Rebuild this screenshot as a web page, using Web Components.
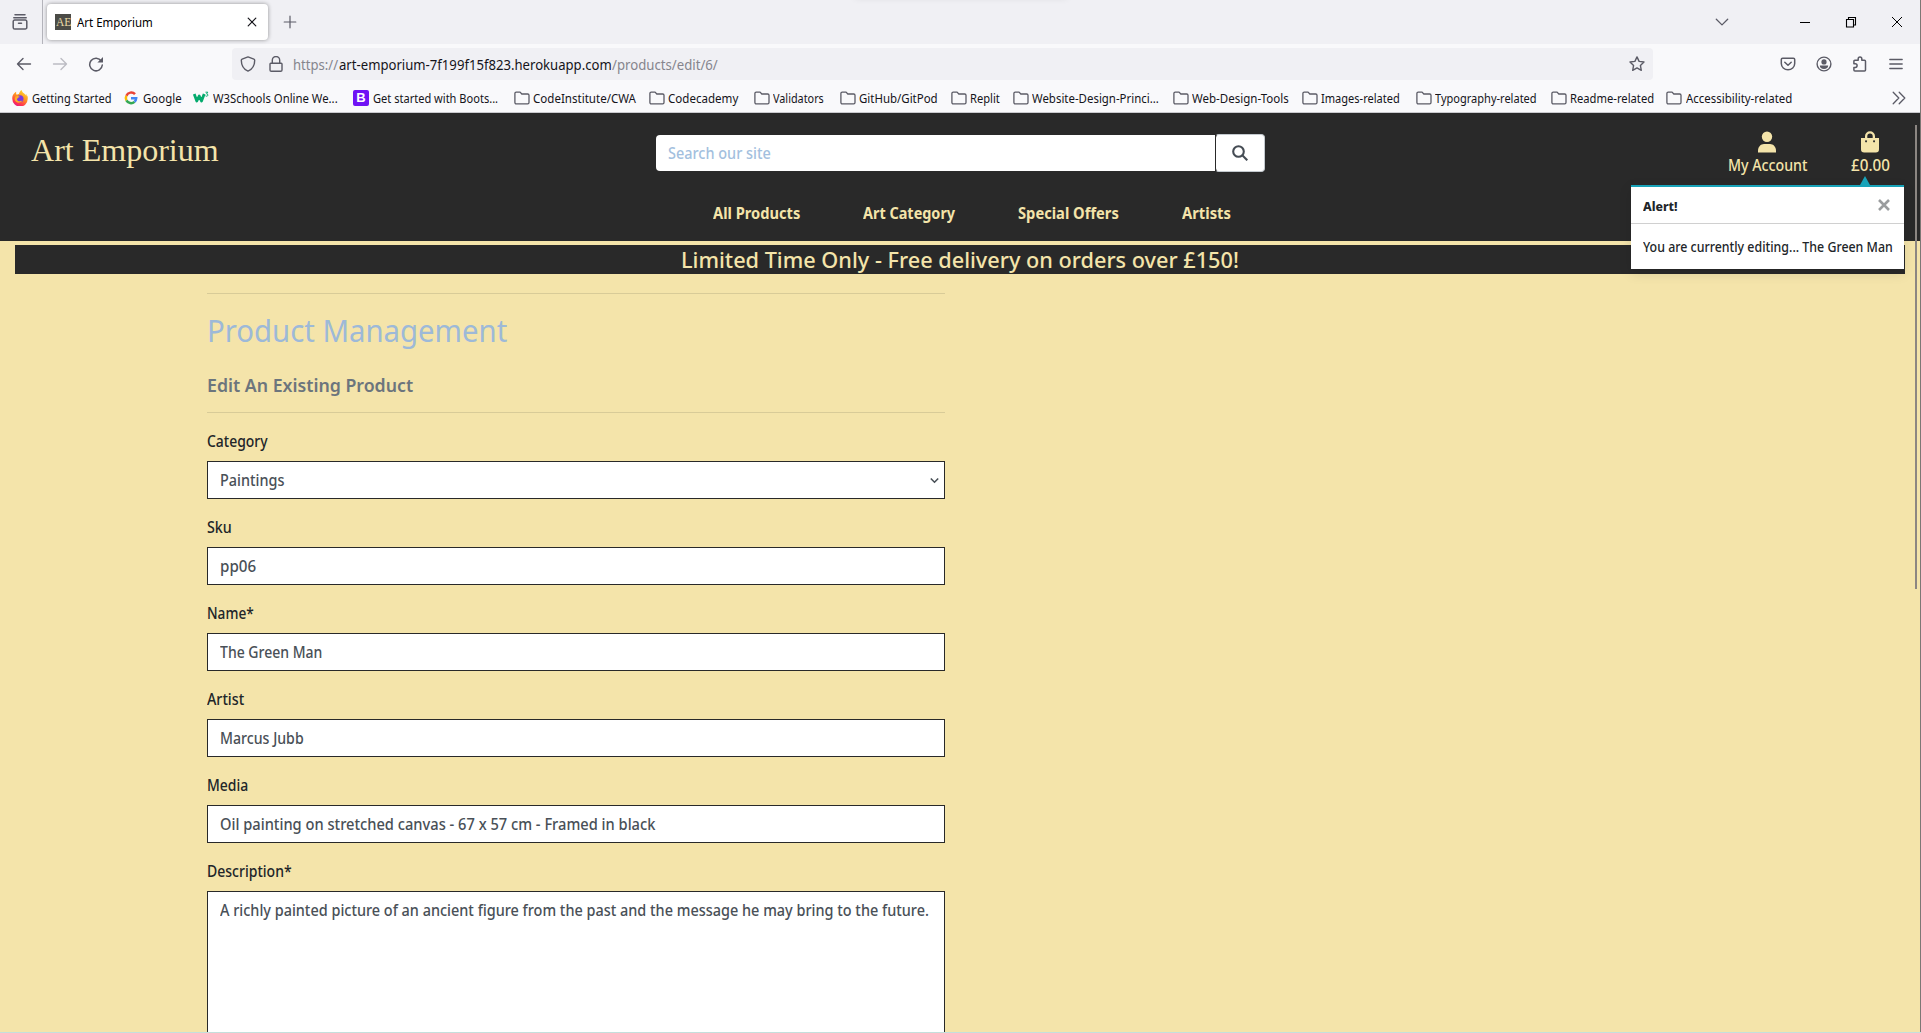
<!DOCTYPE html>
<html lang="en"><head><meta charset="utf-8"><title>Art Emporium</title>
<style>
html,body{margin:0;height:100%;overflow:hidden}
body{font-family:"Noto Sans","Open Sans",sans-serif;background:#f4e4aa}
</style></head><body>
<browser-window></browser-window>
<script>
const el=(name,html)=>customElements.define(name,class extends HTMLElement{
  constructor(){super();this.attachShadow({mode:'open'});}
  connectedCallback(){ if(!this.shadowRoot.firstChild) this.shadowRoot.innerHTML=typeof html==='function'?html(this):html; }
});
const line=(d,w=1.5,c='#5b5b66')=>`<path fill="none" stroke="${c}" stroke-width="${w}" stroke-linecap="round" stroke-linejoin="round" d="${d}"/>`;
const icons={
 view:line('M3 .8h10M1.8 3.8h12.4M2.6 6h10.8a1.4 1.4 0 0 1 1.4 1.4v6a1.6 1.6 0 0 1-1.6 1.6H2.8a1.6 1.6 0 0 1-1.6-1.6v-6A1.4 1.4 0 0 1 2.6 6zM6.5 9.3h3'),
 plus:line('M8 2.2v11.6M2.2 8h11.6',1.2),
 x:line('M4.2 4.2l7.6 7.6M11.8 4.2l-7.6 7.6',1.2,'#15141a'),
 down:line('M2.3 5.2L8 10.9l5.7-5.7',1.3),
 min:`<path fill="none" stroke="#000" d="M3 8.5h10"/>`,
 restore:`<path fill="none" stroke="#000" stroke-width="1.1" d="M3.5 5.5h7v7.5h-7zM5.5 5.5v-2h7v7.5h-2"/>`,
 close:`<path fill="none" stroke="#000" d="M3 3l10 10M13 3L3 13"/>`,
 back:line('M1.5 8h13M7 2.5L1.5 8 7 13.5',1.4),
 fwd:line('M1.500 8h13M9 2.500L14.500 8 9 13.500',1.4,'#bcbcc3'),
 reload:line('M13.300 5.100A6.300 6.300 0 1 0 14.300 9')+'<path fill="#5b5b66" d="M15 1v5.600H9.400z"/>',
 shield:line('M8 .9l5.900 2.300c.5.200.8.500.8 1 0 5-2 8.800-6.700 10.900C3.300 13 1.300 9.200 1.300 4.200c0-.5.300-.8.800-1z',1.4),
 lock:line('M2.800 7.200h10.400a.8.8 0 0 1 .8.8v6a1.300 1.300 0 0 1-1.300 1.300H3.300A1.300 1.300 0 0 1 2 14V8a.8.8 0 0 1 .8-.8zM4.300 7V4.200a3.700 3.700 0 0 1 7.400 0V7',1.4),
 star:line('M8 .9l2.100 4.500 4.900.6-3.600 3.400.9 4.900L8 11.900l-4.300 2.400.9-4.900L1 6l4.900-.6z',1.4),
 pocket:line('M2.600 2.300h10.800a1.300 1.300 0 0 1 1.300 1.300V7.500a6.700 6.300 0 0 1-13.400 0V3.600a1.300 1.300 0 0 1 1.300-1.300z')+line('M4.800 6.200L8 9.300l3.200-3.100'),
 user:`<circle fill="none" stroke="#5b5b66" stroke-width="1.4" cx="8" cy="8" r="6.900"/><circle cx="8" cy="5.900" r="2.600" fill="#5b5b66"/><path fill="#5b5b66" d="M3.800 9.600h8.400c0 2-1.600 3.400-4.200 3.400s-4.200-1.400-4.200-3.400z"/>`,
 puzzle:line('M1.900 5.200a1 1 0 0 1 1-1h3.300V2.700a1.800 1.800 0 0 1 3.600 0v1.500h2.700a1 1 0 0 1 1 1v8.900a1 1 0 0 1-1 1H2.900a1 1 0 0 1-1-1v-2.700h1.400a1.800 1.800 0 0 0 0-3.600H1.900z'),
 menu:line('M1.800 3.500h12.400M1.800 8h12.400M1.800 12.500h12.400',1.3),
 more:line('M2.200 2.300L7.800 8l-5.600 5.700M8.200 2.300L13.800 8l-5.600 5.700',1.3),
 folder:line('M2.200 2.100h3.900l1.700 1.900h5.900a1.300 1.300 0 0 1 1.300 1.300v7.200a1.300 1.300 0 0 1-1.300 1.300H2.200A1.300 1.300 0 0 1 .9 12.500V3.400a1.300 1.300 0 0 1 1.300-1.300z',1.3),
 fox:`<defs><linearGradient id="f" x1=".8" y1="0" x2=".3" y2="1"><stop offset="0" stop-color="#ffe033"/><stop offset=".45" stop-color="#ff9420"/><stop offset=".8" stop-color="#ff3650"/><stop offset="1" stop-color="#e31587"/></linearGradient></defs><path fill="url(#f)" d="M15.600 6.500c-.4-1-1.200-2.100-1.900-2.400.5 1 .8 1.700.9 2.300C13.700 3.800 10 3 9.700 0 7.900 1 7.200 2.700 7 4c-.9 0-1.600.3-2.200.7C4 4 4 2.700 4.300 1.800 2.700 2.600 0 5 .3 8.800A7.700 7.700 0 0 0 15.700 9c.1-.8.100-1.700-.1-2.500z"/><circle cx="8" cy="8.800" r="3.500" fill="#7a3ae0"/><path fill="#ffad24" d="M3.500 6.500c1.500-1 3.400-.6 4.500.5-1.900.2-2 1.500-3 1.700-.4 2.500 3.500 3.600 5.600 1.400-1 3.500-7.300 3.600-8-1.200z"/>`,
 google:`<g fill="none" stroke-width="2.500"><path stroke="#ea4335" d="M12 4.200A5.200 5.200 0 0 0 3.400 5.700"/><path stroke="#fbbc05" d="M3.400 5.700a5.200 5.200 0 0 0 0 4.700"/><path stroke="#34a853" d="M3.400 10.400a5.200 5.200 0 0 0 8.100 1.400"/><path stroke="#4285f4" d="M11.500 11.800A5 5 0 0 0 13.200 8.300H8"/></g>`,
 w3:`<path fill="none" stroke="#04aa6d" stroke-width="2.800" stroke-linejoin="round" d="M1.200 4l2.600 7L6.200 6 8.500 11l2.700-7"/><path fill="none" stroke="#04aa6d" d="M12.500 2.200h2.300l-1.200 1.700c1.800 0 1.700 2.500-.2 2.300l-.9-.4"/>`,
};
el('ui-icon',h=>`<style>:host{display:block;flex:none;width:16px;height:16px}svg{display:block}</style><svg width="16" height="16" viewBox="0 0 16 16">${icons[h.getAttribute('name')]}</svg>`);

el('tab-strip',`<style>
:host{display:flex;height:44px;background:#f0f0f4;align-items:center;position:relative}
.v{width:43px;height:44px;box-sizing:border-box;padding:14px 0 0 12px;border-right:1px solid #b4b4bb}
.tab{display:flex;align-items:center;margin-left:4px;width:221px;height:36px;box-sizing:border-box;padding-left:8px;border-radius:4px;background:#fff;box-shadow:0 0 4px rgba(0,0,0,.4)}
.fav{width:16px;height:16px;flex:none;background:#4b4b46;color:#e8daa6;font:13px/16px "Liberation Serif",serif;display:flex;justify-content:center}
.title{margin-left:6px;font-size:12px}.tab ui-icon{margin-left:91.500px}
.plus{margin-left:14px}.win{margin-left:auto;display:flex;margin-right:16px}
.glow{position:absolute;left:855px;top:-8px;width:212px;height:6px;box-shadow:0 0 7px rgba(0,0,0,.1)}
</style><div class="v"><ui-icon name="view"></ui-icon></div>
<div class="tab"><div class="fav"><fit-text w="15">AE</fit-text></div><fit-text class="title" w="75.500">Art Emporium</fit-text><ui-icon name="x"></ui-icon></div>
<ui-icon class="plus" name="plus"></ui-icon>
<div class="win"><ui-icon name="down"></ui-icon><ui-icon name="min" style="margin-left:67px"></ui-icon><ui-icon name="restore" style="margin-left:30px"></ui-icon><ui-icon name="close" style="margin-left:30px"></ui-icon></div><div class="glow"></div>`);

el('nav-bar',`<style>
:host{display:flex;height:40px;background:#f9f9fb;align-items:center;padding-left:16px}
.url{display:flex;align-items:center;width:1421px;height:32px;margin-left:128px;background:#f0f0f4;border-radius:4px;box-sizing:border-box;padding-left:8px;font-size:13.800px;color:#15141a}
.g{color:#85858d}.url ui-icon+ui-icon{margin-left:12px}.url ui-icon+fit-text{margin-left:9px}
.r{display:flex;gap:20px;margin-left:127px}
</style><ui-icon name="back"></ui-icon><ui-icon name="fwd" style="margin-left:20px"></ui-icon><ui-icon name="reload" style="margin-left:20px"></ui-icon>
<div class="url"><ui-icon name="shield"></ui-icon><ui-icon name="lock"></ui-icon><fit-text w="45.500" class="g">https://</fit-text><fit-text w="273">art-emporium-7f199f15f823.herokuapp.com</fit-text><fit-text w="106" class="g">/products/edit/6/</fit-text><ui-icon name="star" style="margin-left:auto;margin-right:8px"></ui-icon></div>
<div class="r"><ui-icon name="pocket"></ui-icon><ui-icon name="user"></ui-icon><ui-icon name="puzzle"></ui-icon><ui-icon name="menu"></ui-icon></div>`);

el('bookmark-item',h=>`<style>:host{display:flex;align-items:center;flex:none;width:${h.getAttribute('span')}px;gap:3.500px;font-size:11.900px;color:#15141a}
.b{width:16px;height:16px;flex:none;background:#7012f5;color:#fff;border-radius:2px;font:bold 13px/16px "Liberation Sans",sans-serif;text-align:center}</style>
${h.getAttribute('icon')==='boot'?'<div class="b">B</div>':`<ui-icon name="${h.getAttribute('icon')}"></ui-icon>`}<fit-text w="${h.getAttribute('w')}"><slot></slot></fit-text>`);
const marks=[['fox','Getting Started',12,79],['google','Google',123,38.5],['w3','W3Schools Online We...',193,125],['boot','Get started with Boots...',353,125.5],['folder','CodeInstitute/CWA',513.5,103],['folder','Codecademy',648.5,70],['folder','Validators',753.5,51],['folder','GitHub/GitPod',839.5,79],['folder','Replit',950.5,30],['folder','Website-Design-Princi...',1012.5,127],['folder','Web-Design-Tools',1172.5,97],['folder','Images-related',1301.5,79],['folder','Typography-related',1415.5,102],['folder','Readme-related',1550.5,84],['folder','Accessibility-related',1666,106],[0,0,1891]];
el('bookmarks-bar',`<style>:host{display:flex;height:28px;background:#f9f9fb;align-items:center;padding-left:12px;border-bottom:1px solid #c9c9cd}</style>`+marks.slice(0,-1).map((m,i)=>`<bookmark-item icon="${m[0]}" span="${marks[i+1][2]-m[2]}" w="${m[3]}">${m[1]}</bookmark-item>`).join('')+`<ui-icon name="more"></ui-icon>`);

el('account-link',h=>`<style>:host{display:flex;flex-direction:column;align-items:center;font-size:16px;line-height:24px;font-weight:500}svg{display:block}</style><svg width="20" height="22" viewBox="0 0 20 22" fill="#f4e4aa">${h.getAttribute('kind')==='user'?'<circle cx="10" cy="5.800" r="5.200"/><path d="M1 21.500v-1.700c0-4 2.700-6.800 6-6.800h6c3.300 0 6 2.800 6 6.800v1.700z"/>':'<path fill-rule="evenodd" d="M1 7h4V5.300a5 5 0 0 1 10 0V7h4v11.300a3.200 3.200 0 0 1-3.200 3.200H4.200A3.200 3.200 0 0 1 1 18.300zM7.300 7h5.400V5.300a2.700 2.700 0 0 0-5.400 0zM6 9.200a1 1 0 1 0 .1 0zM14 9.200a1 1 0 1 0 .1 0z"/>'}</svg><fit-text w="${h.getAttribute('w')}"><slot></slot></fit-text>`);

el('site-header',`<style>
:host{display:block;height:128px;background:#292929;color:#f4e4aa}
.top{display:flex;height:80px}
.logo{margin:20px 0 0 31px;width:625px;font:31px/36px "Liberation Serif",serif}
.in{margin-top:22px;width:559px;height:36px;box-sizing:border-box;padding-left:12px;border-radius:4px 0 0 4px;background:#fff;color:#a3bfde;line-height:36px;font-weight:500}
.btn{margin-top:21px;width:50px;height:38px;box-sizing:border-box;border:1px solid #c3c9ce;border-left-color:#292929;border-radius:4px;background:#fff;display:flex;align-items:center;justify-content:center}
.acc{display:flex;margin:18px 0 0 462.500px;gap:44px;align-items:flex-start}
nav{display:flex;gap:63px;padding-left:713px;margin-top:8px;font-weight:700;line-height:24px}
</style><div class="top"><div class="logo"><fit-text w="188">Art Emporium</fit-text></div><div class="in"><fit-text w="103">Search our site</fit-text></div><div class="btn"><svg width="16" height="16" viewBox="0 0 16 16" fill="none" stroke="#454c54" stroke-width="2.100"><circle cx="6.500" cy="6.500" r="5.300"/><path d="M10.300 10.300L15.300 15.300"/></svg></div>
<div class="acc"><account-link kind="user" w="79">My Account</account-link><account-link kind="bag" w="39">£0.00</account-link></div></div>
<nav><fit-text w="87">All Products</fit-text><fit-text w="92">Art Category</fit-text><fit-text w="101">Special Offers</fit-text><fit-text w="49">Artists</fit-text></nav>`);

el('promo-banner',`<style>:host{display:flex;justify-content:center;margin:4px 16px 0 15px;height:29px;background:#292929;color:#f4e4aa;font-size:22px;font-weight:500;line-height:29px}</style><fit-text w="558"><slot></slot></fit-text>`);

el('toast-alert',`<style>
:host{display:block;position:absolute;left:1631px;top:185px;width:273px;height:84px;box-sizing:border-box;background:#fff;border-top:2px solid #17a2b8;color:#212529;box-shadow:0 4px 12px rgba(0,0,0,.12)}
.arrow{position:absolute;left:229px;top:-11px;border:solid transparent;border-width:0 5px 9px;border-bottom-color:#17a2b8}
.h{display:flex;height:36px;border-bottom:1px solid #d0d0d0;padding:0 14px 0 12px;align-items:center;justify-content:space-between;font-size:13px;font-weight:800}
.h fit-text{padding-top:2px}
.m{padding-left:12px;line-height:47px;font-size:13.500px;font-weight:500}
</style><div class="arrow"></div><div class="h"><fit-text w="35">Alert!</fit-text><svg width="12" height="12" viewBox="0 0 12 12" fill="none" stroke="#9a9c9e" stroke-width="2.600"><path d="M1 1l10 10M11 1L1 11"/></svg></div><div class="m"><fit-text w="249.500"><slot></slot></fit-text></div>`);

el('form-field',h=>{const k=h.getAttribute('kind');return `<style>
:host{display:block;margin-bottom:16px;line-height:24px;color:#212529;font-weight:500}
.l{height:24px;margin-bottom:8px}
.c{display:flex;justify-content:space-between;height:${k==='area'?'200':'38'}px;box-sizing:border-box;border:1px solid #292929;background:#fff;color:#495057;padding:6px 5px 6px 11.500px}
svg{margin-top:9px}
</style><div class="l"><fit-text w="${h.getAttribute('lw')}">${h.getAttribute('label')}</fit-text></div><div class="c"><fit-text w="${h.getAttribute('w')}"><slot></slot></fit-text>${k==='select'?'<svg width="9" height="8" viewBox="0 0 9 8" fill="none" stroke="#495057" stroke-width="1.600"><path d="M.8 1.500l3.700 3.700 3.700-3.700"/></svg>':''}</div>`});

el('product-form',`<style>
:host{display:block;width:738px;margin:19px 0 0 207px}
hr{margin:0;border:0;border-top:1px solid #d8cb98}
h2,h5{margin:0;font-weight:400}
h2{color:#9db9d8;font-size:30px;line-height:38px;padding:18px 0 0}
h5{color:#6c757d;font-size:18.500px;font-weight:600;line-height:24px;padding:23px 0 15px}
hr+form-field{margin-top:16px}
</style><hr><h2><fit-text w="300">Product Management</fit-text></h2><h5><fit-text w="206">Edit An Existing Product</fit-text></h5><hr>
<form-field kind="select" label="Category" lw="61" w="64">Paintings</form-field>
<form-field label="Sku" lw="25" w="36">pp06</form-field>
<form-field label="Name*" lw="47" w="102.500">The Green Man</form-field>
<form-field label="Artist" lw="37.500" w="84">Marcus Jubb</form-field>
<form-field label="Media" lw="41" w="435">Oil painting on stretched canvas - 67 x 57 cm - Framed in black</form-field>
<form-field kind="area" label="Description*" lw="85" w="709">A richly painted picture of an ancient figure from the past and the message he may bring to the future.</form-field>`);

el('browser-window',`<style>
:host{display:block;position:relative;width:1921px;height:1033px;overflow:hidden;background:#f4e4aa}
.bar{position:absolute;left:1915px;top:125px;width:2px;height:464px;background:#8c8682}
.edge{position:absolute;right:0;top:0;width:1px;height:1033px;background:#7c7875}
.foot{position:absolute;left:0;bottom:0;width:1921px;height:1px;background:#c4dfdc}
</style><tab-strip></tab-strip><nav-bar></nav-bar><bookmarks-bar></bookmarks-bar><site-header></site-header>
<promo-banner>Limited Time Only - Free delivery on orders over £150!</promo-banner><product-form></product-form>
<toast-alert>You are currently editing... The Green Man</toast-alert><div class="bar"></div><div class="edge"></div><div class="foot"></div>`);

/* One line of text, condensed or widened to the measure given in "w". */
customElements.define('fit-text',class extends HTMLElement{
  connectedCallback(){
    if(!this.shadowRoot){this.attachShadow({mode:'open'});
      this.shadowRoot.innerHTML=`<style>:host{display:inline-block;flex:none;width:${this.getAttribute('w')}px;white-space:nowrap;vertical-align:top}span{display:inline-block;transform-origin:0 50%;vertical-align:top}</style><span><slot></slot></span>`;}
    const s=this.shadowRoot.querySelector('span');
    s.style.transform=`scaleX(${(this.getAttribute('w')/s.offsetWidth).toFixed(4)})`;
  }
});
</script></body></html>
